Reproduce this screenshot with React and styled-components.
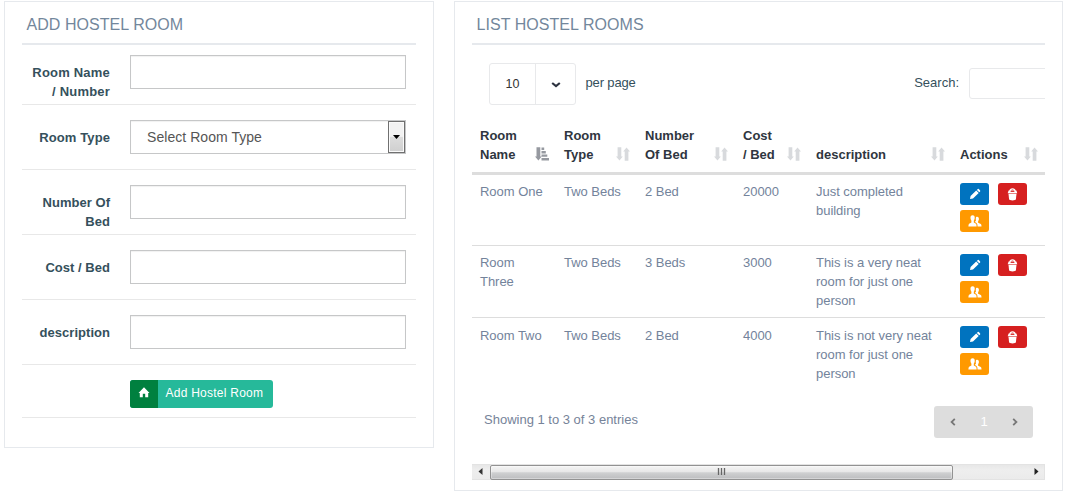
import React from "react";
import styled, { createGlobalStyle } from "styled-components";

const GlobalStyle = createGlobalStyle`
  * { box-sizing: border-box; }
  body {
    margin: 0;
    background: #fff;
    color: #768399;
    font: 13px/19px "Liberation Sans", Arial, sans-serif;
    overflow: hidden;
  }
`;

const Page = styled.main`
  display: flex;
  align-items: flex-start;
  gap: 20px;
  width: 1075px;
  height: 494px;
  padding: 1px 0 0 4px;
`;

const Panel = styled.section`
  width: ${(p) => p.$width}px;
  height: ${(p) => p.$height}px;
  padding: 0 17px;
  border: 1px solid #e6e9ed;
`;

const Title = styled.h2`
  height: 43px;
  margin: 0;
  padding: 12px 5px 0 4.5px;
  border-bottom: 2px solid #e6e9ed;
  font-size: 16px;
  font-weight: 400;
  line-height: 22px;
  letter-spacing: 0.05px;
  color: #73879c;
`;

const FormRow = styled.div`
  display: flex;
  height: ${(p) => p.$height || 65}px;
  padding-top: ${(p) => (p.$first ? 10 : 15)}px;
  padding-right: 10px;
  border-bottom: 1px solid #e8e8e8;
`;

const Label = styled.label`
  flex: none;
  width: 108px;
  padding: 8px 20px 0 0;
  text-align: right;
  white-space: pre-line;
  font-weight: 700;
  color: #35505c;
  letter-spacing: ${(p) => p.$spacing || 0}px;
`;

const Field = styled.input`
  flex: 1;
  min-width: 0;
  height: 34px;
  padding: 0 16px;
  border: 1px solid #c6c7c8;
  border-radius: 0;
  outline: 0;
  background: #fff;
  box-shadow: inset 0 1px 1px rgba(0, 0, 0, 0.06);
`;

const SelectField = styled.div`
  display: flex;
  flex: 1;
  justify-content: space-between;
  height: 34px;
  padding-left: 16px;
  border: 1px solid #c6c7c8;
  box-shadow: inset 0 1px 1px rgba(0, 0, 0, 0.06);
  font-size: 14px;
  line-height: 32px;
  color: #555;
  letter-spacing: 0.05px;
`;

const SelectArrow = styled.span`
  display: flex;
  align-items: center;
  justify-content: center;
  width: 17px;
  height: 32px;
  border: 1px solid #707070;
  background: linear-gradient(#f2f2f2 0 48%, #dddddd 50%, #cfcfcf);
  box-shadow: inset 0 0 0 1px #fafafa;
`;

const SubmitButton = styled.button`
  display: flex;
  width: 143px;
  height: 28px;
  margin-left: 108px;
  padding: 0;
  border: 0;
  border-radius: 3px;
  overflow: hidden;
  background: #26b99a;
  color: #fff;
  font: 12px/27px "Liberation Sans", Arial, sans-serif;
  letter-spacing: 0.25px;
  white-space: nowrap;
`;

const SubmitIcon = styled.span`
  display: flex;
  justify-content: center;
  width: 28px;
  height: 28px;
  margin-right: 7.5px;
  padding: 7px 0 0;
  background: #00803f;
`;

const TableArea = styled.div`
  width: 573px;
  overflow: hidden;
`;

const Controls = styled.div`
  display: flex;
  height: 80px;
  padding: 18px 0 0 17px;
  color: #35505c;
`;

const PageSize = styled.div`
  display: flex;
  width: 87px;
  height: 42px;
  border: 1px solid #e8e9eb;
  border-radius: 3px;
  line-height: 41px;
  color: #333;
`;

const PageSizeValue = styled.span`
  width: 46px;
  border-right: 1px solid #e8e9eb;
  text-align: center;
  font-size: 12.5px;
`;

const PageSizeToggle = styled.span`
  display: flex;
  flex: 1;
  align-items: center;
  justify-content: center;
  padding-top: 2px;
`;

const ControlText = styled.span`
  padding-top: 10px;
  letter-spacing: ${(p) => p.$spacing || 0}px;
  margin-left: ${(p) => p.$left}px;
`;

const SearchGroup = styled.label`
  display: flex;
  flex: none;
  margin-left: auto;
  margin-right: -74px;
`;

const SearchInput = styled.input`
  width: 150px;
  height: 31px;
  margin: 5px 0 0 10px;
  border: 1px solid #e8e9eb;
  border-radius: 3px;
  outline: 0;
`;

const Row = styled.div`
  display: grid;
  grid-template-columns: 84px 81px 98px 73px 144px 93px;
  height: ${(p) => p.$height}px;
  border-bottom: ${(p) => (p.$last ? 0 : 1)}px solid #ddd;
  padding-top: ${(p) => p.$top}px;
`;

const HeadRow = styled(Row)`
  height: 50px;
  padding: 0;
  border-bottom: 3px solid #ddd;
`;

const HeadCell = styled.div`
  display: flex;
  align-items: flex-end;
  justify-content: space-between;
  padding: 0 7px 8px 8px;
  font-weight: 700;
  color: #2f3640;

  svg {
    flex: none;
    margin-bottom: 3px;
  }
`;

const Cell = styled.div`
  padding: 0 8px;
  letter-spacing: -0.03px;
  white-space: pre-line;
  color: #73839b;
`;

const Actions = styled.div`
  display: grid;
  grid-template-columns: 29px 29px;
  grid-auto-rows: 22px;
  gap: 5px 9px;
  padding: ${(p) => p.$top}px 0 0 8px;
`;

const ActionButton = styled.button`
  display: flex;
  align-items: center;
  justify-content: center;
  padding: 0;
  border: 0;
  border-radius: 3px;
  background: ${(p) => p.$color};
`;

const Footer = styled.div`
  display: flex;
  justify-content: space-between;
  height: 73px;
  padding: 15px 12px 0;
`;

const Summary = styled.span`
  padding-top: 4px;
`;

const Pager = styled.nav`
  display: flex;
  align-items: center;
  justify-content: space-between;
  width: 99px;
  height: 32px;
  padding: 0 15px 0 16px;
  border-radius: 3px;
  background: #ddd;
  color: #fff;
`;

const PageNumber = styled.span`
  padding-bottom: 1px;
`;

const Scrollbar = styled.div`
  display: flex;
  align-items: center;
  width: 573px;
  height: 16px;
  border: solid #e3e3e3;
  border-width: 1px 1px 1px 0;
  background: linear-gradient(#e7e7e7, #eeeeee 35%, #ebebeb);
`;

const ScrollArrow = styled.span`
  display: flex;
  justify-content: center;
  width: ${(p) => (p.$right ? 15 : 18)}px;
  padding-right: ${(p) => (p.$right ? 0 : 2)}px;
  margin-left: ${(p) => (p.$right ? "auto" : 0)};
  padding-bottom: 1px;
`;

const ScrollThumb = styled.div`
  display: flex;
  align-items: center;
  justify-content: center;
  width: 463px;
  height: 15px;
  padding-bottom: 2px;
  border: 1px solid #929292;
  border-radius: 2px;
  background: linear-gradient(#f5f5f5, #e7e7e7 45%, #cfd0d1 52%, #bcbdbf);
  box-shadow: inset 0 0 0 1px rgba(255, 255, 255, 0.35);
`;

const HomeIcon = () => (
  <svg width="12" height="11" viewBox="0 0 12 11" fill="#fff">
    <path d="M6 .2 11.5 5.9H10.2V10.2H7.2V6.7H4.8V10.2H1.8V5.9H.5Z" />
  </svg>
);

const PencilIcon = () => (
  <svg width="12" height="12" viewBox="0 0 12 12" fill="#fff">
    <path d="M1 11 1.6 8.1 7.2 2.5 9.7 5 4 10.5ZM7.9 1.9 8.8 1Q9.3.6 9.8 1L11.1 2.4Q11.5 2.9 11.1 3.4L10.3 4.3Z" />
  </svg>
);

const TrashIcon = () => (
  <svg width="11" height="13" viewBox="0 0 11 13">
    <path d="M2.9 3Q3.2.8 5.5.8 7.8.8 8.1 3" fill="none" stroke="#fff" strokeWidth="1.3" />
    <path d="M1.6 2.6H9.4L10.3 5.3H.7Z" fill="#fff" />
    <path d="M1.5 5.8H9.5L8.9 11.6Q8.7 12.4 5.5 12.4 2.3 12.4 2.1 11.6Z" fill="#fff" />
    <path d="M3.6 3.5H7.4" stroke="#d62020" strokeWidth=".9" />
  </svg>
);

const UsersIcon = () => (
  <svg width="14" height="12" viewBox="0 0 14 12" fill="#fff">
    <path d="M4.6.3C6.2.3 6.9 1.5 6.7 3.2 6.6 4.4 6 5.1 5.8 5.7V7.4L8 8.8Q8.6 9.3 8.6 11.4H.4Q.4 9.3 1.1 8.8L3.4 7.4V5.7C3.2 5.1 2.6 4.4 2.5 3.2 2.3 1.5 3.1.3 4.6.3Z" />
    <path d="M8.1 2C9.9 1.1 11.1 2.3 10.9 4.2 10.8 5.3 10.2 5.9 10.1 6.5V7.8L12.8 9.1Q13.5 9.5 13.5 11.4H9.6Q9.6 8.9 8.7 8.2L7.1 7.1V6.3L8.1 6C7.5 5.2 8 4.1 7.8 3.2Z" />
  </svg>
);

const SortIcon = ({ active }) =>
  active ? (
    <svg width="14" height="14" viewBox="0 0 14 14" fill="#9699a0">
      <path d="M1.5 .3H5.3V9.6H6.7L3.4 13.6 0 9.6H1.5ZM6.5 .5H9.2V3H6.5ZM6.5 4H10.8V6.4H6.5ZM6.5 7.4H12.3V9.8H6.5ZM6.5 10.9H14V13.4H6.5Z" />
    </svg>
  ) : (
    <svg width="14" height="14" viewBox="0 0 14 14" fill="#d8dadd">
      <path d="M1.6 .3H5.3V9.6H6.8L3.5 13.6 0 9.6H1.6ZM8.7 13.7V4.4H7.2L10.5.4 14 4.4H12.4V13.7Z" />
    </svg>
  );

const Chevron = ({ right }) => (
  <svg width="6" height="8" viewBox="0 0 6 8" fill="none" stroke="#777" strokeWidth="1.8">
    <path d={right ? "M1.2 .8 4.4 4 1.2 7.2" : "M4.8 .8 1.6 4 4.8 7.2"} />
  </svg>
);

const columns = ["Room\nName", "Room\nType", "Number\nOf Bed", "Cost\n/ Bed", "description", "Actions"];

const HeadText = styled.span`
  white-space: pre-line;
`;

const rooms = [
  { height: 71, top: 7, cells: ["Room One", "Two Beds", "2 Bed", "20000", "Just completed\nbuilding"] },
  { height: 72, top: 7, cells: ["Room\nThree", "Two Beds", "3 Beds", "3000", "This is a very neat\nroom for just one\nperson"] },
  { height: 73, top: 8, cells: ["Room Two", "Two Beds", "2 Bed", "4000", "This is not very neat\nroom for just one\nperson"] },
];

function AddRoomForm() {
  return (
    <Panel $width={430} $height={447}>
      <Title>ADD HOSTEL ROOM</Title>
      <FormRow $first $height={60}>
        <Label $spacing={0.2}>{"Room Name\n/ Number"}</Label>
        <Field />
      </FormRow>
      <FormRow>
        <Label $spacing={0.1}>Room Type</Label>
        <SelectField>
          Select Room Type
          <SelectArrow>
            <svg width="7" height="4" viewBox="0 0 7 4"><path d="M0 0H7L3.5 4Z" /></svg>
          </SelectArrow>
        </SelectField>
      </FormRow>
      {["Number Of\nBed", "Cost / Bed", "description"].map((name) => (
        <FormRow key={name}>
          <Label $spacing={0.03}>{name}</Label>
          <Field />
        </FormRow>
      ))}
      <FormRow $height={53}>
        <SubmitButton>
          <SubmitIcon><HomeIcon /></SubmitIcon>
          Add Hostel Room
        </SubmitButton>
      </FormRow>
    </Panel>
  );
}

function RoomList() {
  return (
    <Panel $width={609} $height={490}>
      <Title>LIST HOSTEL ROOMS</Title>
      <TableArea>
        <Controls>
          <PageSize>
            <PageSizeValue>10</PageSizeValue>
            <PageSizeToggle>
              <svg width="10" height="6" viewBox="0 0 10 6" fill="none" stroke="#2d3340" strokeWidth="2.2">
                <path d="M1.2 1 5 4 8.8 1" />
              </svg>
            </PageSizeToggle>
          </PageSize>
          <ControlText $left={9.5} $spacing={-0.15}>per page</ControlText>
          <SearchGroup>
            <ControlText $left={0}>Search:</ControlText>
            <SearchInput />
          </SearchGroup>
        </Controls>
        <HeadRow>
          {columns.map((name, i) => (
            <HeadCell key={name}>
              <HeadText>{name}</HeadText>
              <SortIcon active={i === 0} />
            </HeadCell>
          ))}
        </HeadRow>
        {rooms.map((room, i) => (
          <Row key={i} $height={room.height} $top={room.top} $last={i === 2}>
            {room.cells.map((text, j) => <Cell key={j}>{text}</Cell>)}
            <Actions $top={8 - room.top}>
              <ActionButton $color="#0073bf"><PencilIcon /></ActionButton>
              <ActionButton $color="#d62020"><TrashIcon /></ActionButton>
              <ActionButton $color="#ff9900"><UsersIcon /></ActionButton>
            </Actions>
          </Row>
        ))}
        <Footer>
          <Summary>Showing 1 to 3 of 3 entries</Summary>
          <Pager>
            <Chevron />
            <PageNumber>1</PageNumber>
            <Chevron right />
          </Pager>
        </Footer>
        <Scrollbar>
          <ScrollArrow>
            <svg width="5" height="7" viewBox="0 0 5 7"><path d="M4.5 0V7L.5 3.5Z" fill="#333" /></svg>
          </ScrollArrow>
          <ScrollThumb>
            <svg width="9" height="7" viewBox="0 0 9 7" stroke="#666" strokeWidth="1.3">
              <path d="M1.5 0V7M4.5 0V7M7.5 0V7" />
            </svg>
          </ScrollThumb>
          <ScrollArrow $right>
            <svg width="5" height="7" viewBox="0 0 5 7"><path d="M.5 0V7L4.5 3.5Z" fill="#222" /></svg>
          </ScrollArrow>
        </Scrollbar>
      </TableArea>
    </Panel>
  );
}

export default function App() {
  return (
    <>
      <GlobalStyle />
      <Page>
        <AddRoomForm />
        <RoomList />
      </Page>
    </>
  );
}
